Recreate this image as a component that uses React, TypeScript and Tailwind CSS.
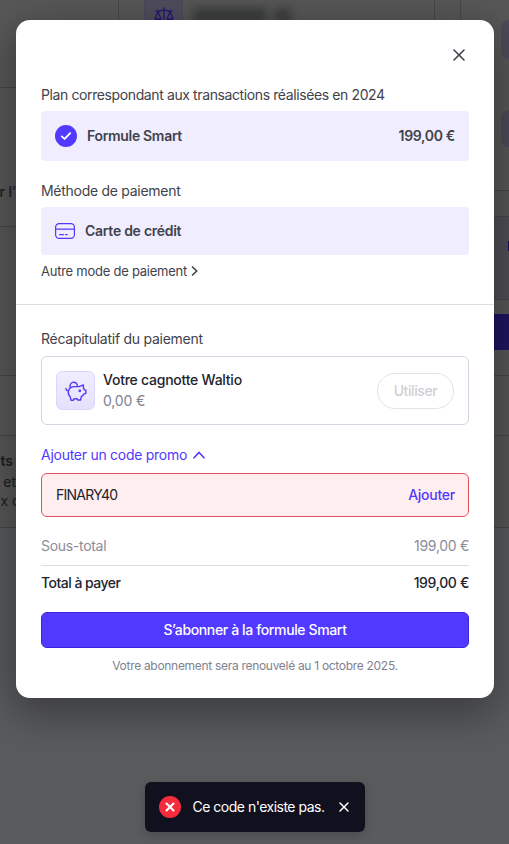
import React from 'react';
import { X } from 'lucide-react';

interface PlanRowProps {
  label: string;
  price: string;
}

const CardIcon: React.FC = () => (
  <svg className="w-5 h-4" viewBox="0 0 20 16" fill="none" stroke="#5139ff" strokeWidth="1.2" strokeLinecap="round">
    <rect x="0.6" y="0.6" width="18.8" height="14.8" rx="3.6" />
    <path d="M0.6 6.2H19.4M4.6 11.6H8.6M10.6 11.6H12.2" />
  </svg>
);

const PiggyIcon: React.FC = () => (
  <svg className="w-[22px] h-[22px]" viewBox="0 0 22 22" fill="none" stroke="#5139ff" strokeWidth="1.4" strokeLinecap="round" strokeLinejoin="round">
    <path d="M5.4 7.6A3.7 3.7 0 1 1 12.4 5.6" />
    <path d="M1 8.4C1 10 2 10.8 3.5 10.6C4.2 8.2 6.2 7 8.6 6.6H14L18.4 4.9V8C18.8 8.6 19.1 9.2 19.3 9.9L20.8 10.3V13.4L18.9 14.2C18.2 15.4 17.2 16.2 16.2 16.8L15.6 20H12.9L11.9 18.7H9.3L8.4 20.2H6L5.2 16.8C3.6 15.2 2.9 13 3.5 10.6" />
    <circle cx="14.8" cy="10.8" r="0.7" fill="#5139ff" />
  </svg>
);

const ScaleIcon: React.FC = () => (
  <svg className="w-5 h-5" viewBox="0 0 20 20" fill="none" stroke="#241a78" strokeWidth="1.4" strokeLinecap="round" strokeLinejoin="round">
    <path d="M10 1V18M2 4.2C5 4.2 8 3.4 10 3C12 3.4 15 4.2 18 4.2M4 4.5L1 12M4 4.5L7 12M16 4.5L13 12M16 4.5L19 12M1 12C2 14 6 14 7 12ZM13 12C14 14 18 14 19 12Z" />
  </svg>
);

const PlanRow: React.FC<PlanRowProps> = ({ label, price }) => (
  <div className="mt-1.5 h-[50px] rounded bg-[#f0edff] px-3.5 flex items-center font-semibold tracking-[-0.32px]">
    <div className="w-[22px] h-[22px] rounded-full bg-[#5139ff] flex items-center justify-center">
      <svg className="w-3 h-3" viewBox="0 0 12 12" fill="none" stroke="#fff" strokeWidth="1.9" strokeLinecap="round" strokeLinejoin="round">
        <path d="M1.8 6.4L4.6 8.9L10.2 3.2" />
      </svg>
    </div>
    <span className="ml-2.5">{label}</span>
    <span className="ml-auto">{price}</span>
  </div>
);

// Dimmed page behind the dialog
const Backdrop: React.FC = () => (
  <div className="absolute inset-0 bg-[#5a5b5d] flex overflow-hidden" aria-hidden="true">
    <div className="w-[119px] h-[528px] bg-[#585858] border-b border-[#48484a] flex flex-col text-[14px] text-[#1c1c20]">
      <div className="h-[88px] border-r border-b border-[#48484a]" />
      <div className="h-[139px] border-b border-[#48484a] pt-[94px]">
        <div className="w-4 flex justify-end whitespace-nowrap leading-5 font-medium">r l’</div>
      </div>
      <div className="h-[149px] border-b border-[#48484a]" />
      <div className="h-[60px] border-b border-[#48484a]" />
      <div className="w-4 pt-[15px] flex flex-col items-end whitespace-nowrap leading-[20px]">
        <span className="font-semibold mr-[3px]">ts</span>
        <span className="mt-px">et</span>
        <span className="-mt-px -mr-1">x c</span>
      </div>
    </div>
    <div className="w-[316px] h-[528px] bg-[#585858] border-r border-b border-[#48484a] flex pl-[25px]">
      <div className="w-[39px] h-9 rounded-b-lg bg-[#504e5b] border border-[#4c4960] flex justify-center pt-1.5">
        <ScaleIcon />
      </div>
      <div className="ml-2.5 mt-2 w-[74px] h-4 bg-[#3b3d3d] blur-[5px]" />
      <div className="ml-2 mt-2 w-4 h-4 bg-[#3b3d3d] blur-[5px]" />
    </div>
    <div className="w-[25px] h-[528px] bg-[#585858] border-b border-[#48484a]" />
    <div className="flex-1 h-[528px] bg-[#585858] border-l border-b border-[#48484a] flex flex-col">
      <div className="mt-5 ml-10 h-[39px] rounded-l-lg bg-[#4d4b59]" />
      <div className="mt-[51px] ml-10 h-[37px] rounded-l-lg bg-[#4d4b59]" />
      <div className="mt-[43px] h-[27px] border-y border-[#48484a]" />
      <div className="h-[83px] bg-[#504f57] border-b border-[#48484a] pt-6 pl-[47px]">
        <div className="h-2.5 bg-[#1a1064]" />
      </div>
      <div className="mt-3.5 h-9 bg-[#1e1562]" />
      <div className="mt-[25px] h-[61px] border-y border-[#48484a]" />
    </div>
  </div>
);

export default function App() {
  return (
    <div className="relative w-[509px] h-[844px] overflow-hidden text-[14px] leading-5 text-[#41424b] [font-family:Inter,'Liberation_Sans',sans-serif]">
      <Backdrop />

      <div className="relative h-full flex flex-col items-center pt-5 pb-3">
        <div className="w-[478px] h-[678px] mr-[-1px] rounded-[14px] bg-white shadow-[0_12px_44px_4px_rgba(0,0,0,0.36)] flex flex-col" role="dialog">
          <div className="h-[285px] px-[25px] border-b border-[#dcdde3]">
            <div className="h-[65px] pt-[25px] flex justify-end">
              <button className="w-5 h-5 flex items-center justify-center" aria-label="Fermer">
                <X className="w-5 h-5" strokeWidth={1.9} />
              </button>
            </div>
            <div className="tracking-[-0.39px] whitespace-nowrap">Plan correspondant aux transactions réalisées en 2024</div>
            <PlanRow label="Formule Smart" price="199,00 €" />

            <div className="mt-5 tracking-[-0.28px]">Méthode de paiement</div>
            <div className="mt-1.5 h-12 rounded bg-[#f0edff] px-3.5 flex items-center gap-2.5 font-semibold tracking-[-0.27px]">
              <CardIcon />
              <span>Carte de crédit</span>
            </div>
            <div className="mt-1.5 flex items-center text-[13px] tracking-[-0.25px]">
              <span>Autre mode de paiement</span>
              <svg className="ml-1 w-2 h-3" viewBox="0 0 8 12" fill="none" stroke="currentColor" strokeWidth="1.6">
                <path d="M1 1.5L5.7 6L1 10.5" />
              </svg>
            </div>
          </div>

          <div className="px-[25px] pt-6">
            <div className="tracking-[-0.26px]">Récapitulatif du paiement</div>
            <div className="mt-[7px] h-[69px] rounded-md border border-[#d4d3e0] px-3.5 flex items-center">
              <div className="w-[39px] h-[39px] rounded-md border border-[#dcd7fa] bg-linear-to-b from-[#f0edff] to-[#e5e1fd] flex items-center justify-center">
                <PiggyIcon />
              </div>
              <div className="ml-2 -mt-px leading-[21px]">
                <div className="font-medium text-[#22232d] tracking-[-0.24px]">Votre cagnotte Waltio</div>
                <div className="text-[#81828f] tracking-[-0.15px]">0,00 €</div>
              </div>
              <button className="ml-auto w-[77px] h-9 rounded-full border border-[#e3e3e6] font-medium text-[#d0d0d3] tracking-[-0.4px]">Utiliser</button>
            </div>

            <button className="mt-5 flex items-center text-[#5139ff] tracking-[-0.27px]">
              <span>Ajouter un code promo</span>
              <svg className="ml-1.5 w-3 h-2" viewBox="0 0 12 8" fill="none" stroke="currentColor" strokeWidth="1.6" strokeLinecap="round">
                <path d="M1 6.8L6 1.4L11 6.8" />
              </svg>
            </button>
            <div className="mt-2 h-11 rounded-md border border-[#e5525d] bg-[#ffeeef] pl-3.5 pr-[13px] flex items-center justify-between text-[#22232d]">
              <span className="tracking-[-0.75px]">FINARY40</span>
              <button className="font-medium text-[#5139ff] tracking-[-0.25px]">Ajouter</button>
            </div>

            <div className="mt-[19px] h-[30px] border-b border-[#dcdde0] flex justify-between text-[#8b8c9a] tracking-[-0.3px]">
              <span>Sous-total</span>
              <span>199,00 €</span>
            </div>
            <div className="mt-[7px] flex justify-between font-medium text-[#22232d]">
              <span className="tracking-[-0.52px]">Total à payer</span>
              <span className="tracking-[-0.35px]">199,00 €</span>
            </div>

            <button className="mt-[19px] w-full h-9 rounded-md border border-[#3b24df] bg-[#5139ff] font-medium text-white tracking-[-0.37px]">
              S’abonner à la formule Smart
            </button>
            <div className="mt-2 text-center text-[12px] text-[#81828f] tracking-[-0.3px]">
              Votre abonnement sera renouvelé au 1 octobre 2025.
            </div>
          </div>
        </div>

        <div className="mt-auto w-[220px] h-[50px] rounded-md bg-[#11101e] shadow-[0_3px_12px_rgba(0,0,0,0.2)] pl-3.5 pr-[13px] flex items-center text-white" role="alert">
          <div className="w-[22px] h-[22px] rounded-full bg-[#f42c3c] flex items-center justify-center">
            <X className="w-3.5 h-3.5" strokeWidth={3.6} />
          </div>
          <span className="ml-3 whitespace-nowrap tracking-[-0.5px]">Ce code n'existe pas.</span>
          <X className="ml-auto w-4 h-4" strokeWidth={2.2} />
        </div>
      </div>
    </div>
  );
}
